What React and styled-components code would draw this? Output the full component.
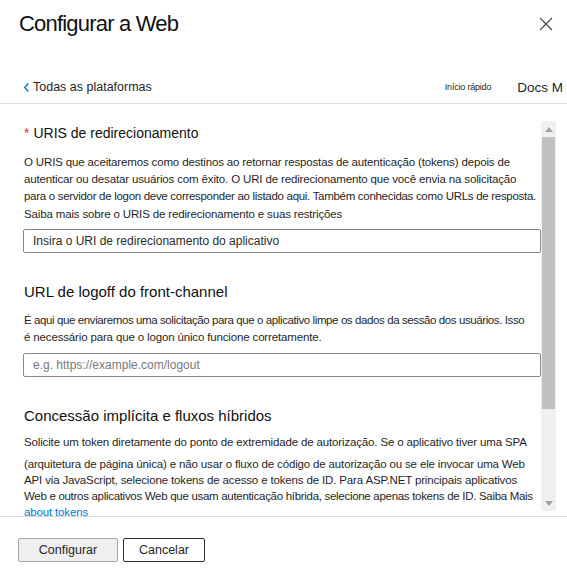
import styled, { createGlobalStyle } from "styled-components";

const TEXT = '#1f1f1f'
const BLUE = '#0078d4'
const LINE = '#dcdcdc'

const GlobalStyle = createGlobalStyle`
  body {
    margin: 0;
    font-family: "Liberation Sans", Arial, sans-serif;
    color: ${TEXT};
    background: #fff;
  }
`

const Dialog = styled.div`
  width: 567px;
  height: 578px;
  display: flex;
  flex-direction: column;
  overflow: hidden;
`

const Header = styled.header`
  height: 70px;
  padding: 10px 14px 0 19px;
  box-sizing: border-box;
  display: flex;
  justify-content: space-between;
  align-items: flex-start;
`

const Title = styled.h1`
  margin: 0;
  font-size: 22px;
  line-height: 28px;
  letter-spacing: -0.8px;
  font-weight: normal;
  color: #111;
`

const CloseButton = styled.button`
  all: unset;
  margin-top: 7px;
  width: 14px;
  height: 14px;
  display: flex;
`

const Nav = styled.nav`
  height: 34px;
  padding: 1px 4px 0 24px;
  box-sizing: border-box;
  display: flex;
  align-items: center;
  border-bottom: 1px solid ${LINE};
  white-space: nowrap;
`

const BackLink = styled.a`
  display: flex;
  align-items: center;
  gap: 4px;
  font-size: 12.5px;
  color: ${TEXT};
  flex: 1;
`

const QuickStart = styled.span`
  font-size: 9px;
  letter-spacing: -0.2px;
  margin-right: 26px;
`

const Docs = styled.span`
  font-size: 13.5px;
`

const ScrollArea = styled.div`
  height: 412px;
  display: flex;
  border-bottom: 1px solid ${LINE};
  overflow: hidden;
`

const Content = styled.div`
  flex: 1;
  min-width: 0;
  padding: 19px 0 0 23px;
`

const Section = styled.section`
  margin-top: ${({ $top }) => $top}px;
`

const Heading = styled.h2`
  margin: 0 0 ${({ $gap }) => $gap}px 1px;
  font-size: ${({ $size }) => $size}px;
  line-height: 20px;
  font-weight: normal;
  color: #111;
`

const Required = styled.span`
  color: #d13438;
  margin-right: 4px;
`

const Line = styled.div`
  margin-left: 1px;
  font-size: 11.5px;
  line-height: ${({ $lh }) => $lh || 17}px;
  letter-spacing: ${({ $ls }) => $ls ?? -0.15}px;
  white-space: nowrap;
  margin-bottom: ${({ $after }) => $after || 0}px;
`

const Link = styled(Line)`
  color: ${BLUE};
`

const Input = styled.input`
  display: block;
  box-sizing: border-box;
  width: 518px;
  height: 24px;
  margin-top: ${({ $top }) => $top}px;
  padding: 0 9px;
  border: 1px solid #8a8a8a;
  border-radius: 2px;
  font-family: inherit;
  font-size: 12px;
  color: ${TEXT};
  &::placeholder {
    color: ${({ $muted }) => ($muted ? '#7a7a7a' : '#2b2b2b')};
  }
`

const Scrollbar = styled.div`
  width: 15px;
  height: 390px;
  margin: 17px 11px 0 0;
  background: #f0f0f0;
  display: flex;
  flex-direction: column;
  align-items: center;
  flex-shrink: 0;
`

const Arrow = styled.div`
  height: 16px;
  display: flex;
  align-items: center;
  justify-content: center;
`

const Thumb = styled.div`
  width: 13px;
  height: 272px;
  background: #c1c1c1;
`

const Track = styled.div`
  flex: 1;
`

const Footer = styled.footer`
  padding: 21px 18px 0;
  display: flex;
  gap: 5px;
`

const Button = styled.button`
  box-sizing: border-box;
  height: 24px;
  width: ${({ $w }) => $w}px;
  padding: 0;
  font-family: inherit;
  font-size: 12.5px;
  color: ${TEXT};
  background: ${({ $primary }) => ($primary ? '#efefef' : '#fff')};
  border: 1px solid ${({ $primary }) => ($primary ? '#a8a8a8' : '#333')};
  border-radius: 2px;
`

const Triangle = ({ down }) => (
  <svg width="8" height="5" viewBox="0 0 8 5">
    <path d={down ? 'M0 0 L8 0 L4 5 Z' : 'M0 5 L8 5 L4 0 Z'} fill="#a3a3a3" />
  </svg>
)

export default function App() {
  return (
    <Dialog>
      <GlobalStyle />
      <Header>
        <Title>Configurar a Web</Title>
        <CloseButton aria-label="Fechar">
          <svg width="14" height="14" viewBox="0 0 14 14">
            <path d="M1 1 L13 13 M13 1 L1 13" stroke="#444" strokeWidth="1.1" />
          </svg>
        </CloseButton>
      </Header>
      <Nav>
        <BackLink>
          <svg width="5" height="9" viewBox="0 0 5 9">
            <path d="M4.3 0.5 L0.8 4.5 L4.3 8.5" stroke={BLUE} strokeWidth="1.4" fill="none" />
          </svg>
          Todas as plataformas
        </BackLink>
        <QuickStart>Início rápido</QuickStart>
        <Docs>Docs M</Docs>
      </Nav>
      <ScrollArea>
        <Content>
          <Section $top={0}>
            <Heading $size={14} $gap={11}><Required>*</Required>URIS de redirecionamento</Heading>
            <Line>O URIS que aceitaremos como destinos ao retornar respostas de autenticação (tokens) depois de</Line>
            <Line>autenticar ou desatar usuários com êxito. O URI de redirecionamento que você envia na solicitação</Line>
            <Line $ls={-0.3}>para o servidor de logon deve corresponder ao listado aqui. Também conhecidas como URLs de resposta.</Line>
            <Line $lh={18}>Saiba mais sobre o URIS de redirecionamento e suas restrições</Line>
            <Input $top={6} placeholder="Insira o URI de redirecionamento do aplicativo" />
          </Section>
          <Section $top={29}>
            <Heading $size={15} $gap={10}>URL de logoff do front-channel</Heading>
            <Line $ls={-0.4}>É aqui que enviaremos uma solicitação para que o aplicativo limpe os dados da sessão dos usuários. Isso</Line>
            <Line>é necessário para que o logon único funcione corretamente.</Line>
            <Input $top={7} $muted placeholder="e.g. https://example.com/logout" />
          </Section>
          <Section $top={29}>
            <Heading $size={15} $gap={8}>Concessão implícita e fluxos híbridos</Heading>
            <Line $after={5}>Solicite um token diretamente do ponto de extremidade de autorização. Se o aplicativo tiver uma SPA</Line>
            <Line $lh={16}>(arquitetura de página única) e não usar o fluxo de código de autorização ou se ele invocar uma Web</Line>
            <Line $lh={16}>API via JavaScript, selecione tokens de acesso e tokens de ID. Para ASP.NET principais aplicativos</Line>
            <Line $lh={16} $ls={-0.3}>Web e outros aplicativos Web que usam autenticação híbrida, selecione apenas tokens de ID. Saiba Mais</Line>
            <Link $lh={16}>about tokens</Link>
          </Section>
        </Content>
        <Scrollbar>
          <Arrow><Triangle /></Arrow>
          <Thumb />
          <Track />
          <Arrow><Triangle down /></Arrow>
        </Scrollbar>
      </ScrollArea>
      <Footer>
        <Button $primary $w={100}>Configurar</Button>
        <Button $w={82}>Cancelar</Button>
      </Footer>
    </Dialog>
  );
}
